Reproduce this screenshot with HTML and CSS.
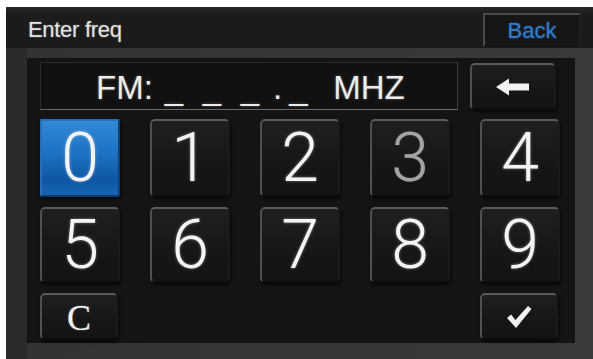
FILE: index.html
```html
<!DOCTYPE html>
<html>
<head>
<meta charset="utf-8">
<link rel="stylesheet" href="styles.css">
</head>
<body>
<div class="screen">
  <div class="header">
    <span class="title">Enter freq</span>
    <div class="back">Back</div>
  </div>
  <div class="frame">
    <div class="panel">
      <div class="top-row">
        <div class="display">
          <span class="fm">FM:</span>
          <span class="u u1">_</span>
          <span class="u u2">_</span>
          <span class="u u3">_</span>
          <span class="dot">.</span>
          <span class="u u4">_</span>
          <span class="mhz">MHZ</span>
        </div>
        <div class="key bksp">
          <svg width="36" height="20" viewBox="0 0 36 20">
            <path d="M1 10 L14 1.5 L14 6.5 L34 6.5 L34 13.5 L14 13.5 L14 18.5 Z" fill="#f2f2f2"/>
          </svg>
        </div>
      </div>
      <div class="keys">
        <div class="key digit active">0</div>
        <div class="key digit">1</div>
        <div class="key digit">2</div>
        <div class="key digit dim">3</div>
        <div class="key digit">4</div>
        <div class="key digit">5</div>
        <div class="key digit">6</div>
        <div class="key digit">7</div>
        <div class="key digit">8</div>
        <div class="key digit">9</div>
      </div>
      <div class="bottom-row">
        <div class="key small clear">C</div>
        <div class="key small ok">
          <svg width="28" height="26" viewBox="0 0 28 26">
            <path d="M2 14 L6 10.5 L10.5 16 L23 2 L26.5 5 L11 24 Z" fill="#f2f2f2"/>
          </svg>
        </div>
      </div>
    </div>
  </div>
</div>
</body>
</html>
```

FILE: styles.css
```css
html, body {
  margin: 0;
  padding: 0;
  background: #ffffff;
}

.screen {
  margin: 7px 0 0 6px;
  width: 587px;
  height: 352px;
  display: flex;
  flex-direction: column;
  font-family: "Liberation Sans", Arial, sans-serif;
}

.header {
  height: 41px;
  flex: none;
  box-sizing: border-box;
  background: linear-gradient(#2a2a2a, #1c1c1c 15%, #1a1a1a);
  display: flex;
  align-items: flex-start;
  justify-content: space-between;
  padding: 0 12px 0 22px;
}

.title {
  color: #e4e4e4;
  font-size: 22px;
  line-height: 22px;
  margin-top: 12px;
  letter-spacing: -0.3px;
  text-shadow: 0 0 2px rgba(255,255,255,0.35);
}

.back {
  margin-top: 6px;
  width: 98px;
  height: 34px;
  box-sizing: border-box;
  border: 2px solid;
  border-color: #4a4a4a #202020 #151515 #4a4a4a;
  background: #161616;
  color: #2f7cd0;
  font-size: 22px;
  display: flex;
  align-items: center;
  justify-content: center;
  padding-top: 2px;
  text-shadow: 0 0 2px rgba(60,140,230,0.5);
}

.frame {
  flex: 1;
  background: linear-gradient(90deg, #2a2a2a 0, #2a2a2a 21px, #333 21px, #3a3a3a 100%);
  padding: 10px 18px 16px 21px;
  box-sizing: border-box;
  display: flex;
}

.panel {
  flex: 1;
  background: #141414;
  padding: 4px 0 0 13px;
  box-sizing: border-box;
  display: flex;
  flex-direction: column;
}

.top-row {
  display: flex;
  align-items: flex-start;
  gap: 12px;
  height: 48px;
}

.display {
  width: 418px;
  height: 48px;
  box-sizing: border-box;
  background: #111;
  border: 1px solid;
  border-color: #2c2c2c #3a3a3a #6a6a6a #2c2c2c;
  color: #ececec;
  font-size: 33px;
  line-height: 33px;
  display: flex;
  align-items: baseline;
  padding: 8px 0 0 55px;
  text-shadow: 0 0 3px rgba(255,255,255,0.3);
}

.display span { display: inline-block; }
.u1 { margin-left: 12px; }
.u2, .u3 { margin-left: 19.6px; }
.dot { margin-left: 14px; }
.u4 { margin-left: 7px; }
.mhz { margin-left: 25.6px; }

.key {
  box-sizing: border-box;
  background: linear-gradient(#1f1f1f, #161616 60%, #131313);
  border: 2px solid;
  border-color: #5a5a5a #1a1a1a #0c0c0c #505050;
  border-radius: 5px;
  box-shadow: 1px 2px 3px rgba(0,0,0,0.7);
  display: flex;
  align-items: center;
  justify-content: center;
  color: #f4f4f4;
}

.bksp {
  width: 86px;
  height: 47px;
  margin-top: 1px;
}

.keys {
  margin-top: 9px;
  display: grid;
  grid-template-columns: repeat(5, 80px);
  grid-template-rows: 78px 76px;
  column-gap: 30px;
  row-gap: 10px;
}

.digit {
  font-family: Roboto, "Liberation Sans", sans-serif;
  font-weight: 300;
  font-size: 68px;
  line-height: 1;
  text-shadow: 0 0 3px rgba(255,255,255,0.45);
}

.digit.dim {
  color: #a4a4a4;
  text-shadow: 0 0 2px rgba(255,255,255,0.2);
}

.digit.active {
  background: linear-gradient(#3189d8, #1e70c2 45%, #0e56a4 80%, #1865b3);
  border-color: #2a6fb5 #0c3f78 #0a3a70 #2a6fb5;
  border-radius: 2px;
}

.bottom-row {
  margin-top: 10px;
  display: grid;
  grid-template-columns: repeat(5, 80px);
  column-gap: 30px;
}

.small {
  width: 78px;
  height: 47px;
}

.clear {
  grid-column: 1;
  font-family: "Liberation Serif", "Times New Roman", serif;
  font-size: 36px;
  line-height: 1;
  padding-top: 2px;
  text-shadow: 0 0 2px rgba(255,255,255,0.4);
}

.ok {
  grid-column: 5;
}
```
